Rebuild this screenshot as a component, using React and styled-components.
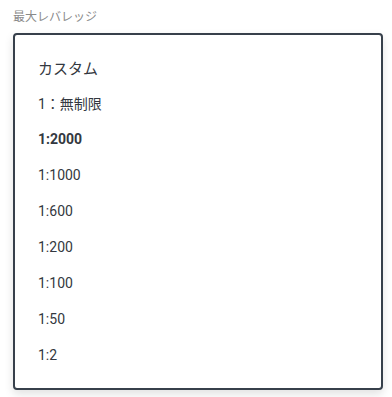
import React from 'react';
import styled, { createGlobalStyle } from 'styled-components';

const GlobalStyle = createGlobalStyle`
  body {
    margin: 0;
    background: #fff;
    font-family: Roboto, "Noto Sans CJK JP", sans-serif;
  }
`;

const Wrapper = styled.div`
  padding: 9px 9px 7px 13px;
`;

const Label = styled.div`
  font-size: 12px;
  line-height: 16px;
  color: #8a8a8a;
  margin-bottom: 8px;
`;

const Menu = styled.ul`
  list-style: none;
  margin: 0;
  padding: 14px 0 15px;
  width: 366px;
  border: 2px solid #37404b;
  border-radius: 4px;
  background: #fff;
  box-shadow: 0 4px 10px rgba(0, 0, 0, 0.12);
`;

const Item = styled.li`
  height: 36px;
  display: flex;
  align-items: center;
  padding-left: 23px;
  font-size: ${p => (p.large ? '15px' : '14px')};
  font-weight: ${p => (p.selected ? 700 : 400)};
  color: #333840;
`;

const options = ['1：無制限', '1:2000', '1:1000', '1:600', '1:200', '1:100', '1:50', '1:2'];

export default function App() {
  return (
    <>
      <GlobalStyle />
      <Wrapper>
        <Label>最大レバレッジ</Label>
        <Menu>
          <Item large>カスタム</Item>
          {options.map(o => (
            <Item key={o} selected={o === '1:2000'}>{o}</Item>
          ))}
        </Menu>
      </Wrapper>
    </>
  );
}
